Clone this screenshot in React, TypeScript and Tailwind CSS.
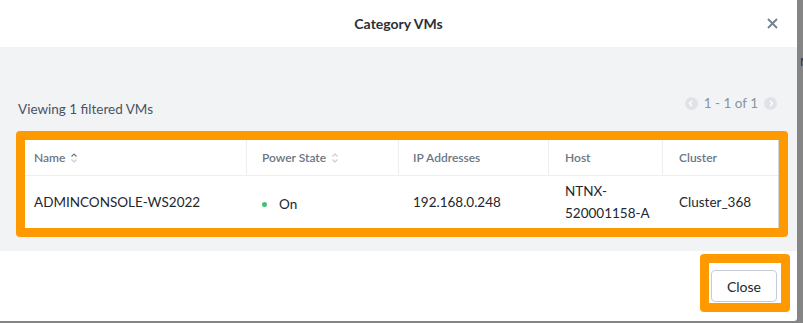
import React from "react";

/** Category VMs modal with annotation highlights. */

function SortIcon({ active }: { active?: boolean }) {
  return (
    <svg width="8" height="12" viewBox="0 0 8 12" fill="none" className="ml-[5px]">
      <path d="M1.5 4.5 L4 2 L6.5 4.5" stroke={active ? "#6b7684" : "#c9ced5"} strokeWidth="1.2" />
      <path d="M1.5 7.5 L4 10 L6.5 7.5" stroke="#c9ced5" strokeWidth="1.2" />
    </svg>
  );
}

function PageArrow({ dir }: { dir: "left" | "right" }) {
  return (
    <span className="flex h-[13px] w-[13px] items-center justify-center rounded-full bg-[#dfe2e6]">
      <svg width="6" height="7" viewBox="0 0 6 7" fill="none">
        <path
          d={dir === "left" ? "M4 1 L1.5 3.5 L4 6" : "M2 1 L4.5 3.5 L2 6"}
          stroke="#ffffff"
          strokeWidth="1.4"
        />
      </svg>
    </span>
  );
}

const cols = [
  { label: "Name", w: "w-[222px]", pl: "pl-[9px]", sort: "active" },
  { label: "Power State", w: "w-[152px]", pl: "pl-[15px]", sort: "idle" },
  { label: "IP Addresses", w: "w-[150px]", pl: "pl-[14px]" },
  { label: "Host", w: "w-[114px]", pl: "pl-[16px]" },
  { label: "Cluster", w: "w-[114px]", pl: "pl-[16px]" },
];

export default function App() {
  return (
    <div className="flex h-[323px] w-[803px] overflow-hidden bg-[#858585] font-['Lato',sans-serif]">
      <div className="flex h-[321px] w-[797px] shrink-0 flex-col rounded-br-[3px] bg-white">
        {/* header */}
        <div className="relative flex h-[47px] shrink-0 items-center justify-center">
          <span className="text-[14px] font-bold text-[#2b3038]">Category VMs</span>
          <svg
            width="11"
            height="11"
            viewBox="0 0 11 11"
            className="absolute right-[19px] top-[18px]"
            fill="none"
          >
            <path d="M1 1 L10 10 M10 1 L1 10" stroke="#74818f" strokeWidth="1.8" />
          </svg>
        </div>

        {/* body */}
        <div className="flex h-[204px] shrink-0 flex-col bg-[#f2f3f5] pl-[16px] pr-[9px]">
          <div className="mt-[50px] flex h-[22px] items-start justify-between pl-[2px] pr-[11px]">
            <span className="mt-[2px] text-[13.5px] text-[#4a5360]">Viewing 1 filtered VMs</span>
            <div className="-mt-[4px] flex items-center gap-[6px] text-[13.5px] text-[#8a94a0]">
              <PageArrow dir="left" />
              <span>1 - 1 of 1</span>
              <PageArrow dir="right" />
            </div>
          </div>

          <div className="mt-[12px] rounded-[4px] border-[9px] border-[#ff9900]">
            <div className="border-r border-[#d4d8dd] bg-white">
              <div className="flex h-[36px] border-b border-[#eceef1]">
                {cols.map((c, i) => (
                  <div
                    key={c.label}
                    className={`${c.w} ${c.pl} flex items-center text-[12px] font-semibold text-[#6b7684] ${
                      i < cols.length - 1 ? "border-r border-[#eceef1]" : ""
                    }`}
                  >
                    {c.label}
                    {c.sort && <SortIcon active={c.sort === "active"} />}
                  </div>
                ))}
              </div>
              <div className="flex h-[52px] text-[13.5px] text-[#22272e]">
                <div className="flex w-[222px] items-center pl-[9px]">ADMINCONSOLE-WS2022</div>
                <div className="flex w-[152px] items-center pl-[15px] pt-[5px]">
                  <span className="mr-[12px] h-[5px] w-[5px] rounded-full bg-[#3cc46f]" />
                  On
                </div>
                <div className="flex w-[150px] items-center pl-[14px]">192.168.0.248</div>
                <div className="flex w-[114px] flex-col justify-center pl-[16px] leading-[22px]">
                  <span>NTNX-</span>
                  <span>520001158-A</span>
                </div>
                <div className="flex w-[114px] items-center pl-[16px]">Cluster_368</div>
              </div>
            </div>
          </div>
        </div>

        {/* footer */}
        <div className="flex flex-1 justify-end pr-[7px] pt-[3px]">
          <div className="h-[58px] rounded-[4px] border-[9px] border-[#ff9900] bg-white pl-[2px] pr-[4px] pt-[7px]">
            <button className="h-[32px] w-[66px] rounded-[4px] border border-[#c6ccd4] bg-white text-[14px] text-[#22272e]">
              Close
            </button>
          </div>
        </div>
      </div>
      <div className="w-[6px] overflow-hidden">
        <span className="ml-[3px] mt-[55px] block text-[12px] leading-[14px] text-[#3a2a4a]">M</span>
      </div>
    </div>
  );
}
